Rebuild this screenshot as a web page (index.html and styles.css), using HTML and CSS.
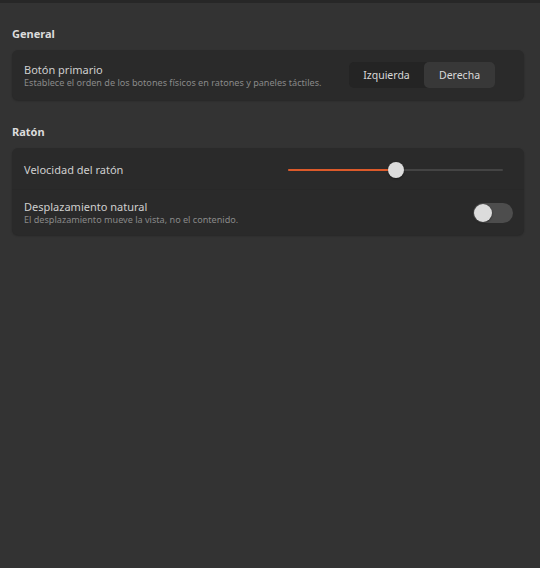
FILE: index.html
```html
<!DOCTYPE html>
<html lang="es">
<head>
<meta charset="utf-8">
<link rel="stylesheet" href="styles.css">
</head>
<body>
<div class="topbar"></div>
<main class="page">
  <section class="group">
    <h2 class="group-title">General</h2>
    <div class="card">
      <div class="row row-button">
        <div class="labels">
          <div class="title">Botón primario</div>
          <div class="subtitle">Establece el orden de los botones físicos en ratones y paneles táctiles.</div>
        </div>
        <div class="segmented">
          <span class="seg">Izquierda</span>
          <span class="seg active">Derecha</span>
        </div>
      </div>
    </div>
  </section>
  <section class="group">
    <h2 class="group-title">Ratón</h2>
    <div class="card">
      <div class="row row-slider">
        <div class="labels">
          <div class="title">Velocidad del ratón</div>
        </div>
        <div class="slider">
          <div class="track"><div class="fill" style="width:50%"></div></div>
          <div class="knob" style="left:50%"></div>
        </div>
      </div>
      <div class="row row-switch">
        <div class="labels">
          <div class="title">Desplazamiento natural</div>
          <div class="subtitle">El desplazamiento mueve la vista, no el contenido.</div>
        </div>
        <div class="switch"><div class="switch-knob"></div></div>
      </div>
    </div>
  </section>
</main>
</body>
</html>
```
FILE: styles.css
```css
* { box-sizing: border-box; }
html, body {
  margin: 0;
  padding: 0;
  background: #333333;
  height: 100%;
}
body {
  font-family: "Noto Sans", "Open Sans", sans-serif;
  color: #d6d6d6;
}
.topbar {
  height: 3px;
  background: #272727;
}
.page {
  padding: 23px 16px 0 12px;
  display: flex;
  flex-direction: column;
  gap: 24px;
}
.group-title {
  margin: 0 0 8px 0;
  font-size: 11px;
  font-weight: 700;
  line-height: 16px;
  color: #dcdcdc;
}
.card {
  background: #2a2a2a;
  border-radius: 6px;
  box-shadow: 0 1px 2px rgba(0,0,0,0.25);
  display: flex;
  flex-direction: column;
}
.row {
  display: flex;
  align-items: center;
  justify-content: space-between;
  padding: 0 11px 0 12px;
}
.row-button { height: 50px; }
.row-slider { height: 41px; padding-top: 2px; }
.row-switch { height: 46px; border-top: 1px solid #282828; }
.labels {
  display: flex;
  flex-direction: column;
}
.title {
  font-size: 11px;
  line-height: 15px;
  color: #cfcfcf;
}
.subtitle {
  font-size: 9.1px;
  line-height: 12px;
  color: #898989;
}
.segmented {
  display: flex;
  background: #242424;
  border-radius: 5px;
  height: 26px;
  margin-right: 18px;
  width: 146px;
}
.seg {
  display: flex;
  align-items: center;
  justify-content: center;
  font-size: 10.5px;
  color: #d8d8d8;
  border-radius: 5px;
}
.seg:first-child { width: 75px; }
.seg.active { width: 71px; background: #383838; }
.slider {
  position: relative;
  width: 215px;
  height: 18px;
  margin-right: 10px;
  display: flex;
  align-items: center;
}
.track {
  width: 100%;
  height: 2px;
  background: #444444;
  border-radius: 1px;
}
.fill {
  height: 100%;
  background: #dc5a2a;
  border-radius: 1px;
}
.knob {
  position: absolute;
  top: 1px;
  width: 16px;
  height: 16px;
  margin-left: -8px;
  border-radius: 50%;
  background: #dcdcdc;
  box-shadow: 0 1px 2px rgba(0,0,0,0.4);
}
.switch {
  width: 40px;
  height: 20px;
  border-radius: 10px;
  background: #4d4d4d;
  display: flex;
  align-items: center;
  padding: 1px;
}
.switch-knob {
  width: 18px;
  height: 18px;
  border-radius: 50%;
  background: #dcdcdc;
  box-shadow: 0 1px 2px rgba(0,0,0,0.4);
}
```
